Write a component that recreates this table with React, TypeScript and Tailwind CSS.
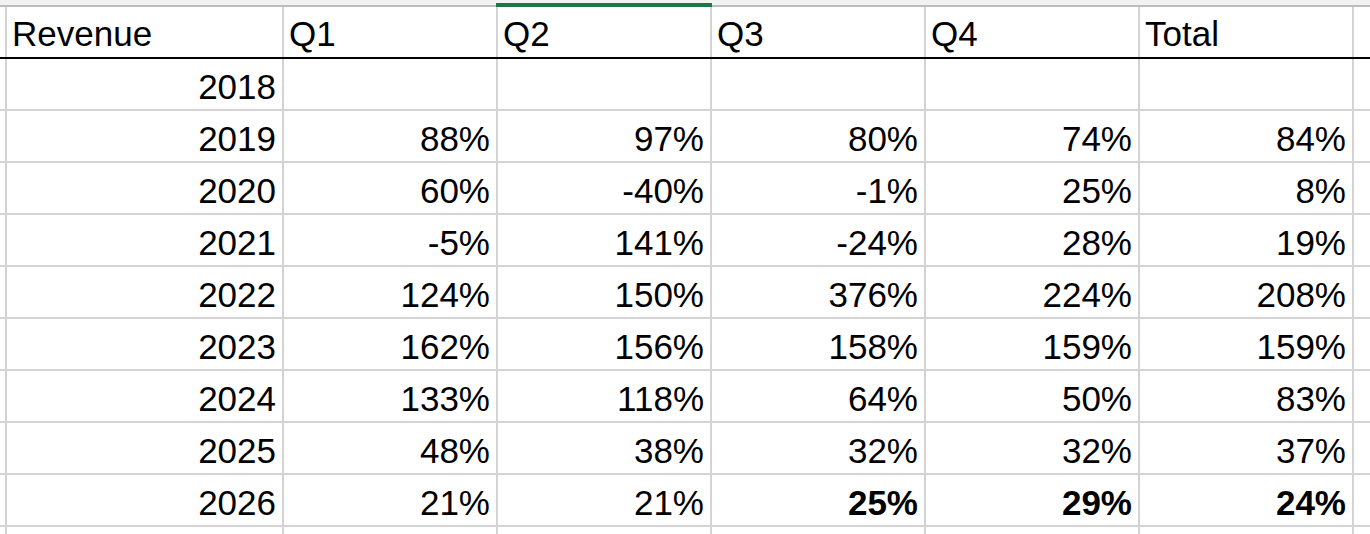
type Value = { text: string; bold?: boolean };

const headers = ['Q1', 'Q2', 'Q3', 'Q4', 'Total'];

const v = (text: string, bold = false): Value => ({ text, bold });

const rows: { year: string; values: Value[] }[] = [
  { year: '2018', values: [] },
  { year: '2019', values: [v('88%'), v('97%'), v('80%'), v('74%'), v('84%')] },
  { year: '2020', values: [v('60%'), v('-40%'), v('-1%'), v('25%'), v('8%')] },
  { year: '2021', values: [v('-5%'), v('141%'), v('-24%'), v('28%'), v('19%')] },
  { year: '2022', values: [v('124%'), v('150%'), v('376%'), v('224%'), v('208%')] },
  { year: '2023', values: [v('162%'), v('156%'), v('158%'), v('159%'), v('159%')] },
  { year: '2024', values: [v('133%'), v('118%'), v('64%'), v('50%'), v('83%')] },
  { year: '2025', values: [v('48%'), v('38%'), v('32%'), v('32%'), v('37%')] },
  { year: '2026', values: [v('21%'), v('21%'), v('25%', true), v('29%', true), v('24%', true)] },
];

function Stub() {
  return <div className="h-full w-[7px] shrink-0 border-r-2 border-[#d4d4d4]" />;
}

function App() {
  return (
    <div className="flex h-[534px] w-full flex-col overflow-hidden bg-white font-['Liberation_Sans',Arial,sans-serif] text-[35px] text-black">
      {/* strip left over from the column letters */}
      <div className="h-[5px] shrink-0 bg-[#f2f2f2]" />

      {/* header row */}
      <div className="flex h-[54px] shrink-0 border-t-2 border-b-2 border-t-[#bdbdbd] border-b-black">
        <Stub />
        <div className="flex h-full w-[277px] shrink-0 items-end border-r-2 border-[#d4d4d4] pb-[6px] pl-[5px] leading-none">
          Revenue
        </div>
        {headers.map((h) => (
          <div
            key={h}
            className="relative flex h-full w-[214px] shrink-0 items-end border-r-2 border-[#d4d4d4] pb-[6px] pl-[5px] leading-none"
          >
            {h === 'Q2' && <div className="absolute -top-1 -right-0.5 -left-0.5 h-1 bg-[#227447]" />}
            {h}
          </div>
        ))}
        <div className="flex-1" />
      </div>

      {rows.map((row) => (
        <div key={row.year} className="flex h-[52px] shrink-0 border-b-2 border-[#d4d4d4]">
          <Stub />
          <div className="flex h-full w-[277px] shrink-0 items-end justify-end border-r-2 border-[#d4d4d4] pr-[6px] pb-[5px] leading-none">
            {row.year}
          </div>
          {headers.map((h, i) => {
            const cell = row.values[i];
            return (
              <div
                key={h}
                className={`flex h-full w-[214px] shrink-0 items-end justify-end border-r-2 border-[#d4d4d4] pr-[6px] pb-[5px] leading-none ${
                  cell?.bold ? 'font-bold' : ''
                }`}
              >
                {cell?.text}
              </div>
            );
          })}
          <div className="flex-1" />
        </div>
      ))}

      {/* empty row below, cut off by the window */}
      <div className="flex h-[52px] shrink-0">
        <Stub />
        <div className="h-full w-[277px] shrink-0 border-r-2 border-[#d4d4d4]" />
        {headers.map((h) => (
          <div key={h} className="h-full w-[214px] shrink-0 border-r-2 border-[#d4d4d4]" />
        ))}
      </div>
    </div>
  );
}

export default App;
